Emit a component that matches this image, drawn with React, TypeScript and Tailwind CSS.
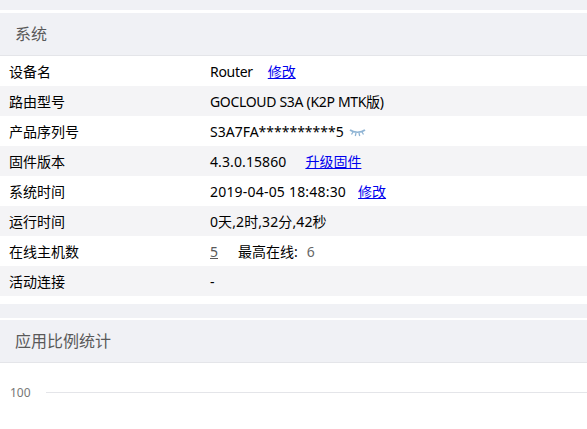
import React from "react";

function Row({ label, alt, children }: { label: string; alt?: boolean; children: React.ReactNode }) {
  return (
    <div className={`flex h-[30px] items-center text-[14px] text-black ${alt ? "bg-[#f4f4f6]" : "bg-white"}`}>
      <div className="w-[210px] pl-[9px]">{label}</div>
      <div className="flex items-center">{children}</div>
    </div>
  );
}

function Header({ title }: { title: string }) {
  return (
    <div className="flex h-[43px] items-center border-b border-[#e4e5e9] bg-[#f0f1f5] pl-[15px] text-[16px] text-[#595959]">
      {title}
    </div>
  );
}

function Lashes() {
  return (
    <svg width="17" height="9" viewBox="0 0 17 9" fill="none" stroke="#8fb4d4" strokeWidth="1.3" className="ml-[5px] mt-[3px]">
      <path d="M1 2C5 5 12 5 16 2" strokeWidth="1.7" />
      <path d="M4 4L2.5 6.5M7 5L6.3 8M10 5L10.7 8M13 4L14.5 6.5" />
    </svg>
  );
}

export default function App() {
  return (
    <div className="h-[429px] w-[587px] overflow-hidden bg-white font-['Noto_Sans','Noto_Sans_CJK_SC',sans-serif]">
      <div className="h-[10px] bg-[#f0f1f5]" />
      <div className="h-[3px]" />
      <Header title="系统" />
      <Row label="设备名">
        <span className="tracking-[-0.3px]">Router</span>
        <a href="#" className="ml-[15px] text-[#0000ee] underline">修改</a>
      </Row>
      <Row label="路由型号" alt>
        <span className="tracking-[-0.32px]">GOCLOUD S3A (K2P MTK版)</span>
      </Row>
      <Row label="产品序列号">
        <span>S3A7FA**********5</span>
        <Lashes />
      </Row>
      <Row label="固件版本" alt>
        <span className="tracking-[0.1px]">4.3.0.15860</span>
        <a href="#" className="ml-[19px] text-[#0000ee] underline">升级固件</a>
      </Row>
      <Row label="系统时间">
        <span className="tracking-[0.2px]">2019-04-05 18:48:30</span>
        <a href="#" className="ml-[12px] text-[#0000ee] underline">修改</a>
      </Row>
      <Row label="运行时间" alt>
        <span className="tracking-[0.1px]">0天,2时,32分,42秒</span>
      </Row>
      <Row label="在线主机数">
        <a href="#" className="text-[#595959] underline">5</a>
        <span className="ml-[20px]">最高在线:</span>
        <span className="ml-[9px] text-[#666666]">6</span>
      </Row>
      <Row label="活动连接" alt>
        <span>-</span>
      </Row>
      <div className="h-[8px]" />
      <div className="h-[14px] bg-[#f0f1f5]" />
      <div className="h-[2px]" />
      <Header title="应用比例统计" />
      <div className="flex items-center pt-[21px]">
        <span className="w-[46px] pl-[10px] text-[12px] text-[#777777]">100</span>
        <div className="mb-[2px] h-px flex-1 bg-[#e4e5e9]" />
      </div>
    </div>
  );
}
